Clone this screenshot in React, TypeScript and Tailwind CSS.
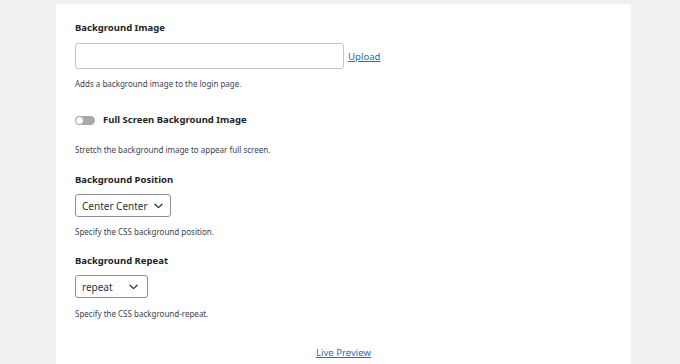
import React from "react";

const Chevron = () => (
  <svg width="9" height="6" viewBox="0 0 9 6" fill="none">
    <path d="M1 1.2 L4.5 4.6 L8 1.2" stroke="#2c3338" strokeWidth="1.3" strokeLinecap="round" strokeLinejoin="round" />
  </svg>
);

export default function App() {
  return (
    <div className="w-[680px] h-[364px] overflow-hidden bg-[#f0f0f1] pt-[4px] pl-[56px]" style={{ fontFamily: '"Noto Sans", "Open Sans", sans-serif' }}>
      <div className="w-[575px] h-[360px] bg-white pl-[19px] pt-[17px]">
        <div className="h-[14px] leading-[14px] text-[9.5px] font-bold text-[#1d2327]">Background Image</div>
        <div className="mt-[8px] flex items-center h-[26px]">
          <div className="w-[269px] h-[26px] border border-[#c3c4c7] rounded-[3px] bg-white" />
          <a className="ml-[4px] text-[9.6px] text-[#2271b1] underline leading-[14px] mt-[2px]">Upload</a>
        </div>
        <div className="mt-[9px] h-[12px] leading-[12px] text-[8px] text-[#3c434a]">Adds a background image to the login page.</div>

        <div className="mt-[23px] h-[14px] flex items-center">
          <div className="relative w-[20px] h-[9px] rounded-full bg-[#a7aaad]">
            <div className="absolute left-0 top-0 w-[9px] h-[9px] rounded-full bg-white border border-[#a7aaad]" />
          </div>
          <div className="ml-[8px] text-[9.5px] font-bold text-[#1d2327] leading-[14px]">Full Screen Background Image</div>
        </div>
        <div className="mt-[17px] h-[12px] leading-[12px] text-[8px] text-[#3c434a]">Stretch the background image to appear full screen.</div>

        <div className="mt-[17px] h-[14px] leading-[14px] text-[9.5px] font-bold text-[#1d2327]">Background Position</div>
        <div className="mt-[7px] w-[96px] h-[23px] border border-[#8c8f94] rounded-[3px] flex items-center pl-[6px] pr-[7px] justify-between">
          <span className="text-[10px] text-[#2c3338] leading-[14px]">Center Center</span>
          <Chevron />
        </div>
        <div className="mt-[9px] h-[12px] leading-[12px] text-[8px] text-[#3c434a]">Specify the CSS background position.</div>

        <div className="mt-[16px] h-[14px] leading-[14px] text-[9.5px] font-bold text-[#1d2327]">Background Repeat</div>
        <div className="mt-[7px] w-[73px] h-[23px] border border-[#8c8f94] rounded-[3px] flex items-center pl-[6px] pr-[9px] justify-between">
          <span className="text-[10px] text-[#2c3338] leading-[14px]">repeat</span>
          <Chevron />
        </div>
        <div className="mt-[10px] h-[12px] leading-[12px] text-[8px] text-[#3c434a]">Specify the CSS background-repeat.</div>

        <div className="mt-[26px] h-[14px] flex justify-center pr-[19px]">
          <a className="text-[9.6px] text-[#2271b1] underline leading-[14px]">Live Preview</a>
        </div>
      </div>
    </div>
  );
}
